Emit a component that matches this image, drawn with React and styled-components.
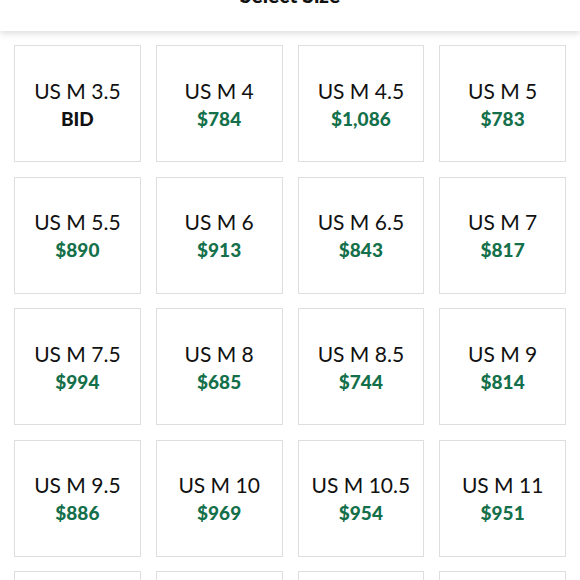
import React from "react";
import styled, { createGlobalStyle } from "styled-components";

const Global = createGlobalStyle`
  html, body { margin: 0; padding: 0; background: #fff; }
  body { font-family: Lato, "Noto Sans", sans-serif; overflow: hidden; }
`;

const Page = styled.div`
  width: 580px;
  height: 580px;
  overflow: hidden;
  background: #fff;
`;

const Header = styled.header`
  position: relative;
  z-index: 1;
  height: 31px;
  display: flex;
  justify-content: center;
  align-items: flex-start;
  overflow: hidden;
  background: #fff;
  box-shadow: 0 3px 6px rgba(0, 0, 0, 0.12);
`;

const Title = styled.h1`
  margin: -17px 0 0;
  font-family: Lato, sans-serif;
  font-size: 21px;
  font-weight: 900;
  line-height: 24px;
  color: #111;
`;

const Grid = styled.div`
  display: grid;
  grid-template-columns: repeat(4, 1fr);
  grid-auto-rows: 117px;
  column-gap: 15px;
  row-gap: 14.5px;
  padding: 14px 14px 0;
`;

const Card = styled.button`
  display: flex;
  flex-direction: column;
  align-items: center;
  justify-content: center;
  gap: 4px;
  padding: 0;
  background: #fff;
  border: 1.5px solid #dedede;
  font-family: Lato, sans-serif;
  cursor: pointer;
`;

const Size = styled.span`
  font-size: 21px;
  font-weight: 400;
  color: #111;
  line-height: 26px;
`;

const Price = styled.span`
  font-size: 19px;
  font-weight: 900;
  line-height: 22px;
  color: ${(p) => (p.$bid ? "#111" : "#14704a")};
`;

const items = [
  ["3.5", "BID"], ["4", "$784"], ["4.5", "$1,086"], ["5", "$783"],
  ["5.5", "$890"], ["6", "$913"], ["6.5", "$843"], ["7", "$817"],
  ["7.5", "$994"], ["8", "$685"], ["8.5", "$744"], ["9", "$814"],
  ["9.5", "$886"], ["10", "$969"], ["10.5", "$954"], ["11", "$951"],
  ["11.5", "$902"], ["12", "$915"], ["12.5", "$980"], ["13", "$899"],
];

export default function App() {
  return (
    <Page>
      <Global />
      <Header>
        <Title>Select Size</Title>
      </Header>
      <Grid>
        {items.map(([s, p]) => (
          <Card key={s}>
            <Size>US M {s}</Size>
            <Price $bid={p === "BID"}>{p}</Price>
          </Card>
        ))}
      </Grid>
    </Page>
  );
}
